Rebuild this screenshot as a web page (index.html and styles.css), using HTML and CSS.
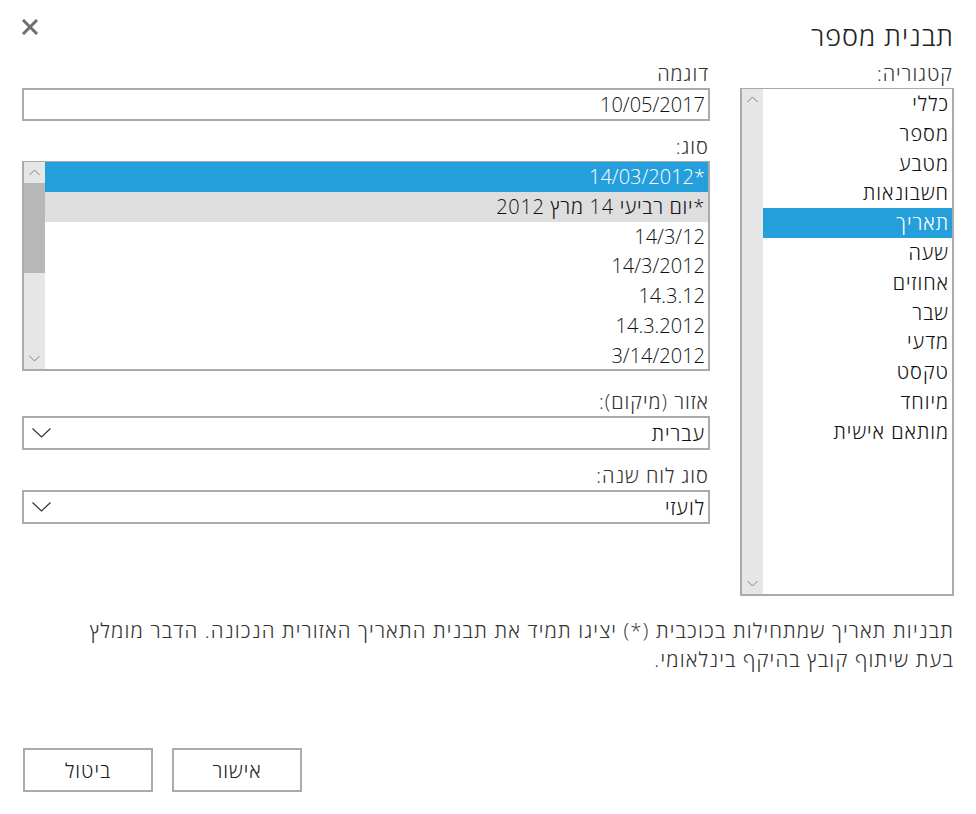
FILE: index.html
```html
<!DOCTYPE html>
<html lang="he" dir="rtl">
<head>
<meta charset="utf-8">
<title>תבנית מספר</title>
<link rel="stylesheet" href="styles.css">
</head>
<body>
<div class="dialog">
  <div class="header">
    <div class="title">תבנית מספר</div>
    <svg class="close" width="16" height="16" viewBox="0 0 16 16" aria-label="סגור">
      <path d="M2 2 L14 14 M14 2 L2 14" stroke="#6e6e6e" stroke-width="3" stroke-linecap="square"/>
    </svg>
  </div>
  <div class="main">
    <div class="col-cat">
      <div class="label">קטגוריה:</div>
      <div class="listbox cat-list">
        <div class="items">
          <div class="item">כללי</div>
          <div class="item">מספר</div>
          <div class="item">מטבע</div>
          <div class="item">חשבונאות</div>
          <div class="item selected">תאריך</div>
          <div class="item">שעה</div>
          <div class="item">אחוזים</div>
          <div class="item">שבר</div>
          <div class="item">מדעי</div>
          <div class="item">טקסט</div>
          <div class="item">מיוחד</div>
          <div class="item">מותאם אישית</div>
        </div>
        <div class="scrollbar">
          <svg class="arrow" width="11" height="7" viewBox="0 0 11 7"><path d="M0.5 6 L5.5 1 L10.5 6" fill="none" stroke="#808080" stroke-width="1"/></svg>
          <div class="track"></div>
          <svg class="arrow" width="11" height="7" viewBox="0 0 11 7"><path d="M0.5 1 L5.5 6 L10.5 1" fill="none" stroke="#808080" stroke-width="1"/></svg>
        </div>
      </div>
    </div>
    <div class="col-opts">
      <div class="label">דוגמה</div>
      <div class="sample num">10/05/2017</div>
      <div class="label gap-sm">סוג:</div>
      <div class="listbox type-list">
        <div class="items">
          <div class="item num selected">*14/03/2012</div>
          <div class="item mixed hover">*יום רביעי 14 מרץ 2012</div>
          <div class="item num">14/3/12</div>
          <div class="item num">14/3/2012</div>
          <div class="item num">14.3.12</div>
          <div class="item num">14.3.2012</div>
          <div class="item num">3/14/2012</div>
        </div>
        <div class="scrollbar">
          <svg class="arrow" width="11" height="7" viewBox="0 0 11 7"><path d="M0.5 6 L5.5 1 L10.5 6" fill="none" stroke="#808080" stroke-width="1"/></svg>
          <div class="track"><div class="thumb"></div></div>
          <svg class="arrow" width="11" height="7" viewBox="0 0 11 7"><path d="M0.5 1 L5.5 6 L10.5 1" fill="none" stroke="#808080" stroke-width="1"/></svg>
        </div>
      </div>
      <div class="label gap-lg">אזור (מיקום):</div>
      <div class="select">
        <span class="value">עברית</span>
        <svg class="chev" width="19" height="10" viewBox="0 0 19 10"><path d="M0.5 0.5 L9.5 9 L18.5 0.5" fill="none" stroke="#333" stroke-width="1.2"/></svg>
      </div>
      <div class="label gap-sm">סוג לוח שנה:</div>
      <div class="select">
        <span class="value">לועזי</span>
        <svg class="chev" width="19" height="10" viewBox="0 0 19 10"><path d="M0.5 0.5 L9.5 9 L18.5 0.5" fill="none" stroke="#333" stroke-width="1.2"/></svg>
      </div>
    </div>
  </div>
  <p class="note">תבניות תאריך שמתחילות בכוכבית (*) יציגו תמיד את תבנית התאריך האזורית הנכונה. הדבר מומלץ<br>בעת שיתוף קובץ בהיקף בינלאומי.</p>
  <div class="buttons">
    <button class="btn">אישור</button>
    <button class="btn">ביטול</button>
  </div>
</div>
</body>
</html>
```
FILE: styles.css
```css
* { box-sizing: border-box; }
html, body { margin: 0; padding: 0; background: #fff; }
body {
  font-family: "Open Sans", "DejaVu Sans", sans-serif;
  font-weight: 300;
  letter-spacing: 1px;
  color: #222;
  width: 976px;
  height: 814px;
  overflow: hidden;
}
.dialog {
  padding: 12px 22px 0 22px;
}
.header {
  display: flex;
  justify-content: space-between;
  align-items: flex-start;
  height: 48px;
}
.title {
  font-size: 27px;
  line-height: 48px;
  color: #222;
}
.close {
  margin-top: 7px;
  display: block;
}
.main {
  display: grid;
  grid-template-columns: 214px 688px;
  column-gap: 30px;
}
.label {
  font-size: 20px;
  line-height: 28px;
  height: 28px;
  color: #333;
  padding-right: 1px;
  white-space: nowrap;
}
.gap-sm { margin-top: 12px; }
.gap-lg { margin-top: 17px; }
.listbox {
  border: 2px solid #aaa;
  border-top-width: 1px;
  display: flex;
  background: #fff;
}
.items {
  flex: 1;
  overflow: hidden;
}
.item {
  height: 29.8px;
  line-height: 29.8px;
  font-size: 20px;
  padding-right: 3px;
  color: #111;
  white-space: nowrap;
}
.num { letter-spacing: 0; }
.mixed { letter-spacing: 0.7px; }
.item.selected {
  background: #259fdb;
  color: #fff;
}
.item.hover {
  background: #dedede;
}
.scrollbar {
  width: 21px;
  background: #e6e6e6;
  display: flex;
  flex-direction: column;
  align-items: center;
}
.arrow { display: block; flex: none; margin: 7px 0; }
.track { flex: 1; width: 100%; }
.cat-list { height: 508px; }
.type-list { height: 210px; }
.thumb {
  background: #b8b8b8;
  height: 90px;
  width: 100%;
}
.sample {
  border: 2px solid #aaa;
  height: 33px;
  line-height: 29px;
  font-size: 20px;
  padding-right: 3px;
  color: #111;
}
.select {
  border: 2px solid #aaa;
  height: 34px;
  display: flex;
  justify-content: space-between;
  align-items: center;
  padding: 0 3px 0 8px;
}
.select .value {
  font-size: 20px;
  color: #111;
}
.chev { display: block; }
.note {
  margin: 20px 0 0 0;
  font-size: 20.5px;
  letter-spacing: 1.15px;
  line-height: 29px;
  color: #333;
}
.buttons {
  display: flex;
  justify-content: flex-end;
  gap: 19px;
  margin-top: 74px;
  padding-left: 1px;
}
.btn {
  width: 130px;
  height: 44px;
  border: 2px solid #aaa;
  background: #fff;
  font-family: inherit;
  font-weight: 300;
  letter-spacing: 1px;
  font-size: 20px;
  color: #222;
  padding: 0;
}
```
